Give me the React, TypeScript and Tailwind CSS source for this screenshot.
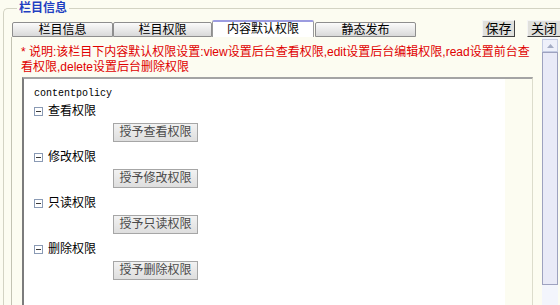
import React from 'react';

const items = [
  { label: '查看权限', button: '授予查看权限' },
  { label: '修改权限', button: '授予修改权限' },
  { label: '只读权限', button: '授予只读权限' },
  { label: '删除权限', button: '授予删除权限' },
];

function Tab({ label, active, className }: { label: string; active?: boolean; className: string }) {
  if (active) {
    return (
      <div
        className={`h-[17px] flex items-center justify-center bg-white border-t-2 border-t-[#9c9ce0] border-x border-x-[#9a9a9a] rounded-t-[2px] leading-[15px] ${className}`}
      >
        {label}
      </div>
    );
  }
  return (
    <div
      className={`h-[15px] flex items-center justify-center border border-[#8e8e8e] rounded-t-[2px] bg-gradient-to-b from-[#fbfbfb] to-[#d9d9d9] leading-[14px] ${className}`}
    >
      {label}
    </div>
  );
}

function TreeIcon() {
  return (
    <span className="w-[9px] h-[9px] border border-[#8a9ab4] bg-white flex items-center justify-center">
      <span className="w-[5px] h-px bg-[#3a3a3a]" />
    </span>
  );
}

export default function App() {
  return (
    <div
      className="w-[560px] h-[305px] overflow-hidden bg-[#fcfcf1] text-[12px] text-black"
      style={{ fontFamily: '"Liberation Sans", "Noto Sans CJK SC", sans-serif' }}
    >
      <fieldset className="ml-[3px] w-[570px] border-l border-t border-[#d3d3c3] rounded-tl-[5px]">
        <legend className="ml-[13px] px-[2px] h-[16px] leading-[16px] font-bold text-[#1f3fc2]">栏目信息</legend>

        {/* tabs + actions */}
        <div className="flex items-end h-[21px]">
          <Tab label="栏目信息" className="ml-[8px] w-[101px]" />
          <Tab label="栏目权限" className="w-[99px]" />
          <Tab label="内容默认权限" active className="w-[102px]" />
          <Tab label="静态发布" className="ml-px w-[101px]" />
          <button className="ml-[66px] mb-0 w-[33px] h-[17px] text-[13px] leading-[15px] bg-[#e0e0dc] border border-t-[#f4f4f4] border-l-[#f4f4f4] border-r-[#404040] border-b-[#404040]">
            保存
          </button>
          <button className="ml-[12px] w-[34px] h-[17px] text-[13px] leading-[15px] bg-[#e0e0dc] border border-t-[#f4f4f4] border-l-[#f4f4f4] border-r-[#404040] border-b-[#404040]">
            关闭
          </button>
        </div>

        {/* panel */}
        <div className="ml-[7px] w-[548px] h-[268px] border-l border-[#c3c3b3] flex">
          <div className="flex-1 flex flex-col pt-[8px] pl-[9px]">
            <p className="w-[515px] text-[#e00000] leading-[15px]">
              * 说明:该栏目下内容默认权限设置:view设置后台查看权限,edit设置后台编辑权限,read设置前台查看权限,delete设置后台删除权限
            </p>
            <div className="mt-[2px] ml-px w-[511px] flex-1 flex border-t-2 border-t-[#a4a4a4] border-l-2 border-l-[#7c7c7c] border-r border-r-[#dcdccc]">
              <div className="w-[481px] bg-white pt-[7px] pl-[10px]">
                <div
                  className="h-[16px] leading-[16px] text-[10px]"
                  style={{ fontFamily: '"Liberation Mono", monospace' }}
                >
                  contentpolicy
                </div>
                {items.map((it) => (
                  <div key={it.label} className="flex flex-col">
                    <div className="h-[18px] flex items-center gap-[5px]">
                      <TreeIcon />
                      <span className="leading-[18px]">{it.label}</span>
                    </div>
                    <div className="mt-[3px] mb-[6px] ml-[79px]">
                      <button className="w-[85px] h-[19px] leading-[17px] text-[#4a4a4a] border border-[#a6a6a6] bg-gradient-to-b from-[#f2f2f2] to-[#dedede]">
                        {it.button}
                      </button>
                    </div>
                  </div>
                ))}
              </div>
            </div>
          </div>
          {/* scrollbar */}
          <div className="w-[16px] mr-px flex flex-col bg-[#f3f5fc]">
            <div className="mt-[2px] h-[13px] border border-[#c4cbe2] bg-[#eef0fa] flex items-center justify-center">
              <svg width="7" height="4" viewBox="0 0 7 4">
                <path d="M0 4 L3.5 0 L7 4 Z" fill="#a4acc4" />
              </svg>
            </div>
            <div className="h-[233px] border border-[#9ea2bf] bg-[#e9eaf7]" />
          </div>
        </div>
      </fieldset>
    </div>
  );
}
